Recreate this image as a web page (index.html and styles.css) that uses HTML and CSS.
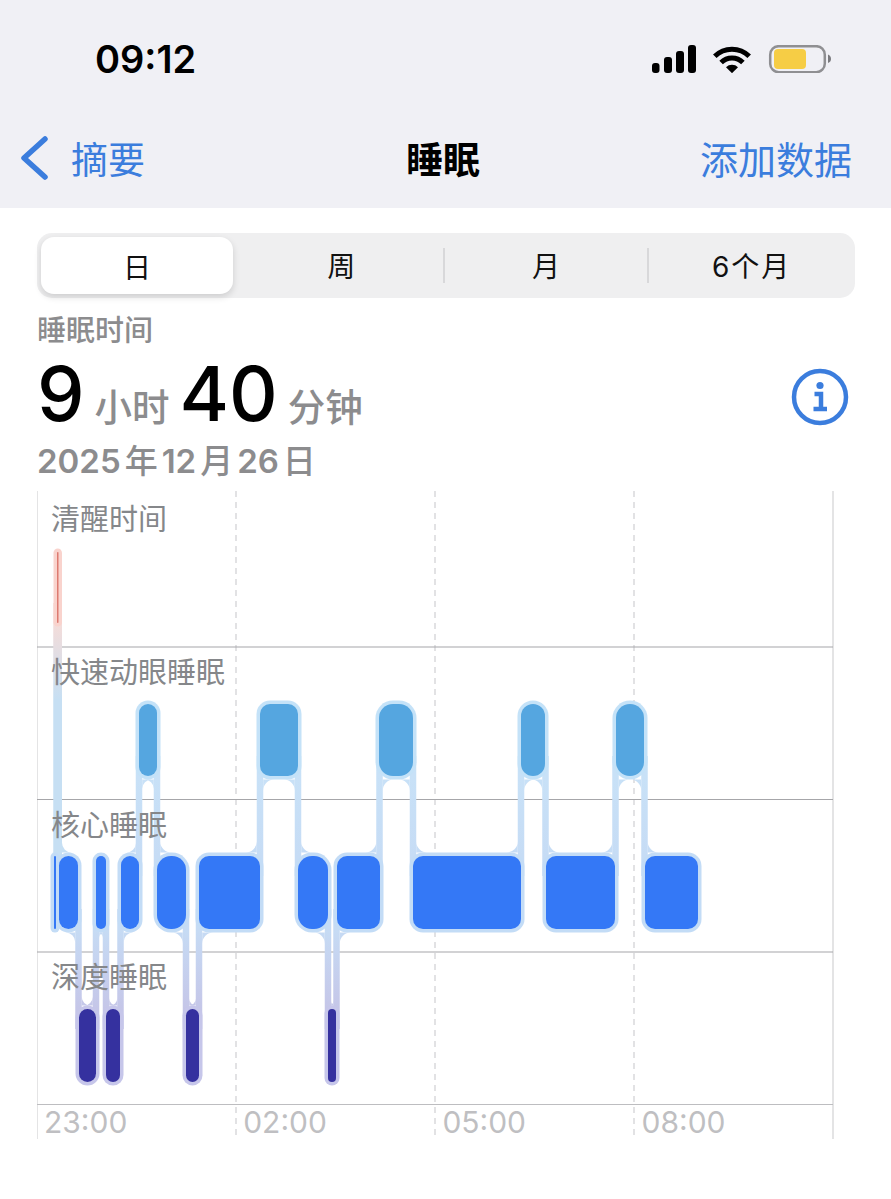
FILE: index.html
```html
<!DOCTYPE html>
<html lang="zh">
  <head>
    <meta charset="utf-8">
    <link rel="stylesheet" href="styles.css">
    <title>睡眠</title>
  </head>
  <body>
    <header class="top">
      <div class="status">
        <span class="clock">09:12</span>
        <svg class="status-icons" width="180" height="28" viewBox="652 45 180 28">
          <!-- signal -->
          <rect x="652" y="63" width="7.5" height="10" rx="3"/>
          <rect x="664" y="57" width="8" height="16" rx="3"/>
          <rect x="676" y="51" width="8" height="22" rx="3"/>
          <rect x="688" y="45" width="8" height="28" rx="3"/>
          <!-- wifi -->
          <path class="wifi-arc" d="M714.8 56.3a24.3 24.3 0 0 1 34.4 0"/>
          <path class="wifi-arc" d="M721.1 62.6a15.4 15.4 0 0 1 21.8 0"/>
          <path d="M726 67.2a8.5 8.5 0 0 1 12 0L732 73.2z"/>
          <!-- battery -->
          <rect class="batt-case" x="770.2" y="46.2" width="54.6" height="26" rx="8.5"/>
          <rect class="batt-fill" x="774" y="49" width="32" height="20" rx="4"/>
          <path class="batt-nub" d="M828 54.5c2 .6 3 2.4 3 4.3s-1 3.7-3 4.2z"/>
        </svg>
      </div>
      <nav class="nav">
        <a class="nav-back">
          <svg class="chevron" width="28" height="44" viewBox="0 0 28 44">
            <path d="M25 3 4 22l21 19"/>
          </svg>
          <span>摘要</span>
        </a>
        <h1 class="nav-title">睡眠</h1>
        <a class="nav-action">添加数据</a>
      </nav>
    </header>

    <main class="content">
      <div class="tabs">
        <div class="tab tab-active">日</div>
        <div class="tab">周</div>
        <div class="tab tab-sep">月</div>
        <div class="tab tab-sep">6个月</div>
      </div>

      <div class="summary">
        <div class="summary-label">睡眠时间</div>
        <div class="summary-main">
          <div class="duration">
            <span class="big">9</span>
            <span class="unit">小时</span>
            <span class="big">40</span>
            <span class="unit">分钟</span>
          </div>
          <svg class="info" width="58" height="58" viewBox="0 0 58 58">
            <circle cx="29" cy="29" r="26"/>
            <circle class="info-dot" cx="29" cy="17.5" r="3.6"/>
            <path d="M23.5 26H30V41M22.5 41H36"/>
          </svg>
        </div>
        <div class="summary-date">2025<span class="date-unit">年</span>12<span class="date-unit">月</span>26<span class="date-unit">日</span></div>
      </div>

      <section class="chart">
        <svg id="sleepBars" class="chart-bars" width="797" height="648" viewBox="37 491 797 648"></svg>
        <div class="stage stage-first">清醒时间</div>
        <div class="stage">快速动眼睡眠</div>
        <div class="stage">核心睡眠</div>
        <div class="stage">深度睡眠</div>
        <div class="axis">
          <span>23:00</span>
          <span>02:00</span>
          <span>05:00</span>
          <span>08:00</span>
        </div>
      </section>
    </main>

    <script src="chart.js"></script>
  </body>
</html>
```

FILE: styles.css
```css
* {
  box-sizing: border-box;
}
html,
body {
  margin: 0;
  height: 1199px;
  overflow: hidden;
  background: #fff;
}
body {
  font-family: "Noto Sans CJK SC", Inter, sans-serif;
}

/* Top bar */
.top {
  height: 208px;
  background: #f0f0f5;
}
.status {
  display: flex;
  justify-content: space-between;
  align-items: center;
  height: 118px;
  padding: 0 59px 0 95px;
}
.clock {
  font: 600 38px Inter, sans-serif;
  color: #000;
}
.status-icons {
  fill: #000;
}
.wifi-arc {
  fill: none;
  stroke: #000;
  stroke-width: 5;
}
.batt-case {
  fill: none;
  stroke: #8f8f92;
  stroke-width: 2.5;
}
.batt-fill {
  fill: #f6cd45;
}
.batt-nub {
  fill: #7a7a7e;
}
.nav {
  display: grid;
  grid-template-columns: 1fr auto 1fr;
  align-items: center;
  height: 80px;
  padding: 0 39px 0 20px;
  font-size: 37px;
  line-height: 1;
  color: #3b7ddd;
}
.nav-back {
  display: flex;
  align-items: center;
  gap: 23px;
}
.chevron {
  fill: none;
  stroke: #3b7ddd;
  stroke-width: 5.5;
  stroke-linecap: round;
  stroke-linejoin: round;
}
.nav-title {
  margin: 0 0 0 14px;
  font-size: 37px;
  font-weight: 700;
  color: #000;
}
.nav-action {
  justify-self: end;
  font-size: 38px;
}

/* Page body */
.content {
  padding: 25px 36px 0 37px;
}
.tabs {
  display: grid;
  grid-template-columns: 198px 1fr 1fr 1fr;
  height: 65px;
  padding: 3px 2px 5px 4px;
  border-radius: 15px;
  background: #efeff0;
  font-family: Inter, "Noto Sans CJK SC", sans-serif;
  font-size: 28px;
  color: #111;
}
.tab {
  position: relative;
  display: flex;
  align-items: center;
  justify-content: center;
  padding-left: 2px;
  letter-spacing: 2px;
}
.tab-active {
  width: 192px;
  margin: 1px 0 -1px;
  border-radius: 13px;
  background: #fff;
  box-shadow: 0 3px 7px rgba(0, 0, 0, 0.14);
}
.tab-sep::before {
  content: "";
  position: absolute;
  left: -1px;
  top: 12px;
  bottom: 10px;
  width: 2px;
  background: #d8d8da;
}
.summary {
  color: #8c8c8e;
}
.summary-label {
  margin-top: 10px;
  font-size: 29px;
  font-weight: 500;
  line-height: 40px;
}
.summary-main {
  display: flex;
  justify-content: space-between;
  align-items: center;
  height: 82px;
  padding: 10px 6px 0 0;
}
.duration {
  display: flex;
  align-items: baseline;
  gap: 10px;
}
.big {
  font: 500 75.5px/72px Inter, sans-serif;
  color: #000;
}
.unit {
  font-size: 37.5px;
  line-height: 40px;
  font-weight: 500;
}
.info {
  margin-top: 6px;
  fill: none;
  stroke: #3b7ddd;
  stroke-width: 4.5;
}
.info-dot {
  fill: #3b7ddd;
  stroke: none;
}
.summary-date {
  margin-top: 9px;
  font-family: Inter, "Noto Sans CJK SC", sans-serif;
  font-size: 33px;
  font-weight: 600;
  line-height: 44px;
  white-space: nowrap;
}
.date-unit {
  margin: 0 4px;
  font-weight: 500;
}

/* Sleep chart */
.chart {
  position: relative;
  width: 797px;
  height: 648px;
  margin-top: 8px;
}
.chart-bars {
  position: absolute;
  left: 0;
  top: 0;
}
.stage {
  position: relative;
  height: 152.5px;
  padding: 5px 0 0 14px;
  font-size: 29px;
  line-height: 36px;
  color: #85878a;
}
.stage-first {
  height: 156px;
  padding-top: 8px;
}
.axis {
  position: relative;
  display: grid;
  grid-template-columns: repeat(4, 199.2px);
  padding-top: 2px;
  font: 400 30px/30px Inter, sans-serif;
  color: #bfbfc2;
}
.axis span {
  padding-left: 7px;
}
```

FILE: chart.js
```js
// Sleep stages as they follow each other through the night, x in page pixels
var segments = [
  ['core', 54, 56], ['awake', 57, 58.5], ['core', 59, 78], ['deep', 79, 96],
  ['core', 96, 106], ['deep', 106, 120], ['core', 121, 139], ['rem', 139, 157],
  ['core', 157, 186], ['deep', 186, 199], ['core', 199, 260], ['rem', 260, 298],
  ['core', 298, 328], ['deep', 328, 336], ['core', 337, 380], ['rem', 379, 413],
  ['core', 413, 521], ['rem', 521, 545], ['core', 546, 615], ['rem', 616, 644],
  ['core', 645, 698]
];

var stages = {
  awake: { top: 552, bottom: 623, fill: '#dd7a70', halo: '#f9d3cd' },
  rem: { top: 704, bottom: 776, fill: '#55a6e0', halo: '#c4e2f8' },
  core: { top: 856, bottom: 929, fill: '#3478f6', halo: '#c3dcf6' },
  deep: { top: 1009, bottom: 1082, fill: '#35319f', halo: '#c6c6ea' }
};

var HALO = 3.5;
var STRIP = 6.5;
var out = '';

function gradient(id, y1, y2, from, to) {
  return '<linearGradient id="' + id + '" gradientUnits="userSpaceOnUse" x1="0" x2="0"' +
    ' y1="' + y1 + '" y2="' + y2 + '"><stop offset="0" stop-color="' + from + '"/>' +
    '<stop offset="1" stop-color="' + to + '"/></linearGradient>';
}

// Background grid
function line(x1, y1, x2, y2, color, dash) {
  return '<line x1="' + x1 + '" y1="' + y1 + '" x2="' + x2 + '" y2="' + y2 + '" stroke="' + color +
    '" stroke-width="1.2"' + (dash ? ' stroke-dasharray="6 5"' : '') + '/>';
}

out += '<defs>' +
  gradient('awake-core', 620, 700, '#f6dcd8', '#c6dff3') +
  gradient('rem-core', 776, 856, '#c8e1f7', '#c6dcf5') +
  gradient('core-deep', 930, 1009, '#c6dbf4', '#c5c6e8') +
  '</defs>';

[37, 833].forEach(function(x) {
  out += line(x, 491, x, 1139, '#d2d2d4');
});
[236, 435, 634].forEach(function(x) {
  out += line(x, 491, x, 1139, '#cfcfd2', true);
});
[647, 799.5, 952].forEach(function(y) {
  out += line(37, y, 833, y, '#a6a6a9');
});
out += line(37, 1104.5, 833, 1104.5, '#bdbdc0');

// Concave corner where a strip meets the rounded glow of a bar
function fillet(ex, ey, dx, dy, r, fill) {
  var sweep = dx * dy > 0 ? 0 : 1;
  return '<path fill="url(#' + fill + ')" d="M' + (ex + dx * r) + ' ' + ey + 'A' + r + ' ' + r + ' 0 0 ' + sweep + ' ' +
    ex + ' ' + (ey + dy * r) + 'L' + ex + ' ' + ey + 'Z"/>';
}

function filletSize(seg) {
  var inner = seg[2] - seg[1] + 2 * HALO - STRIP;
  return Math.min(11, Math.max(0, inner / 2));
}

// Strips joining one stage to the next
for (var i = 0; i < segments.length - 1; i++) {
  var a = segments[i];
  var b = segments[i + 1];
  var x = (a[2] + b[1]) / 2;
  var aUp = stages[a[0]].top < stages[b[0]].top;
  var up = aUp ? a : b;
  var low = aUp ? b : a;
  var fill = up[0] === 'awake' ? 'awake-core' : up[0] === 'rem' ? 'rem-core' : 'core-deep';
  var y1 = stages[up[0]].bottom;
  var y2 = stages[low[0]].top;
  var upSide = aUp ? -1 : 1;

  out += '<rect fill="url(#' + fill + ')" x="' + (x - STRIP / 2) + '" y="' + (y1 - 20) +
    '" width="' + STRIP + '" height="' + (y2 - y1 + 40) + '"/>';
  out += fillet(x + upSide * STRIP / 2, y1 + HALO, upSide, 1, filletSize(up), fill);
  out += fillet(x - upSide * STRIP / 2, y2 - HALO, -upSide, -1, filletSize(low), fill);
}

// Glow first, solid bar on top
segments.forEach(function(seg) {
  var s = stages[seg[0]];
  var w = seg[2] - seg[1];
  var r = w <= 34 ? Math.min(w / 2, 14) : 10;
  out += '<rect fill="' + s.halo + '" x="' + (seg[1] - HALO) + '" y="' + (s.top - HALO) + '" width="' +
    (w + 2 * HALO) + '" height="' + (s.bottom - s.top + 2 * HALO) + '" rx="' + (r + HALO) + '"/>';
});
segments.forEach(function(seg) {
  var s = stages[seg[0]];
  var w = seg[2] - seg[1];
  var r = w <= 34 ? Math.min(w / 2, 14) : 10;
  out += '<rect fill="' + s.fill + '" x="' + seg[1] + '" y="' + s.top + '" width="' + w +
    '" height="' + (s.bottom - s.top) + '" rx="' + r + '"/>';
});

document.getElementById('sleepBars').innerHTML = out;
```
